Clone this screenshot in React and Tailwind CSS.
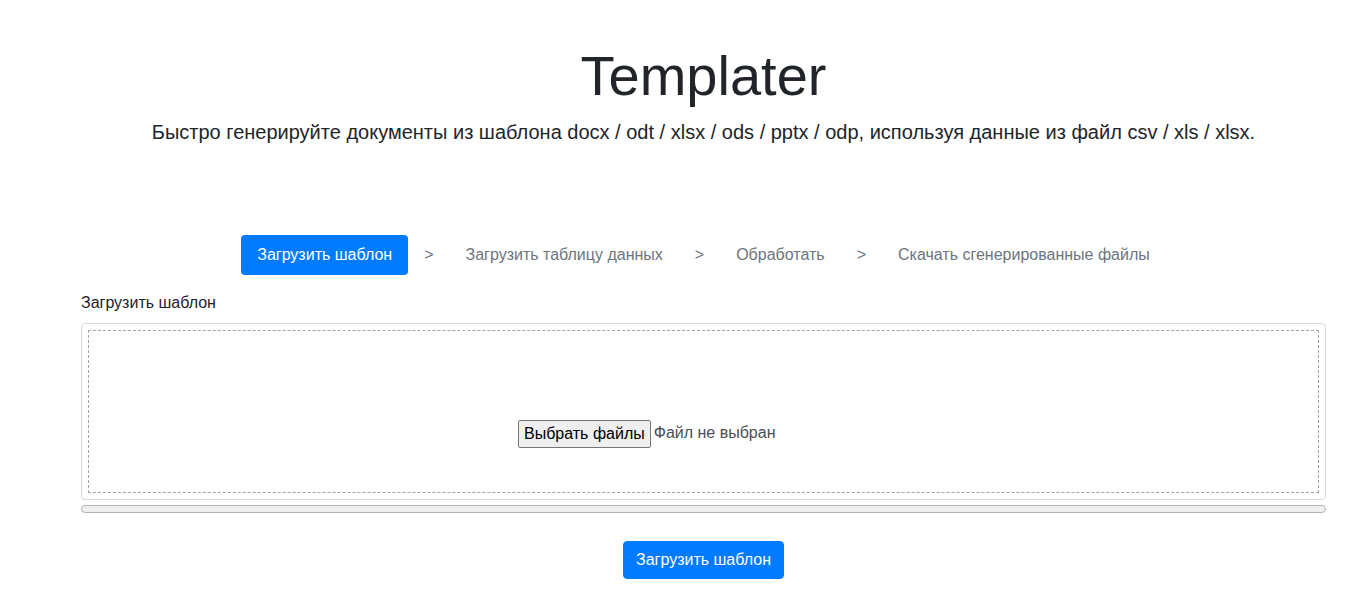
const STEPS = ["Загрузить шаблон", "Загрузить таблицу данных", "Обработать", "Скачать сгенерированные файлы"];

export default function App() {
  const active = 0;

  return (
    <div className="min-h-screen bg-white text-[#212529]" style={{ fontFamily: '"Liberation Sans", Arial, sans-serif' }}>
      <div className="ml-[45px] pt-[42px]">
        <h1 className="mb-2 text-center text-[56px] font-light leading-[1.2]">Templater</h1>
        <p className="text-center text-[20px] font-light leading-[1.5]">
          Быстро генерируйте документы из шаблона docx / odt / xlsx / ods / pptx / odp, используя данные из файл csv / xls / xlsx.
        </p>

        <nav className="mt-[88px] flex items-center justify-center text-[16px] leading-6">
          {STEPS.map((step, index) => (
            <div className="flex items-center" key={step}>
              {index > 0 ? <span className="px-4 text-[#6c757d]">&gt;</span> : null}
              <span
                className={
                  index === active
                    ? "rounded bg-[#007bff] px-4 py-2 text-white"
                    : "px-4 py-2 text-[#6c757d]"
                }
              >
                {step}
              </span>
            </div>
          ))}
        </nav>

        <div className="mx-[36px] mt-[16px]">
          <label className="mb-2 block text-[16px] leading-6">Загрузить шаблон</label>
          <div className="rounded border border-[#dcdcdc] p-[6px]">
            <div className="flex h-[163px] items-start border border-dashed border-[#9aa7a7] pl-[429px] pt-[89px]">
              <button className="rounded-[2px] border border-[#767676] bg-[#efefef] px-[5px] py-[1px] text-[16px] leading-6 text-black">
                Выбрать файлы
              </button>
              <span className="ml-[3px] pt-[1px] text-[16px] leading-6 text-[#495057]">Файл не выбран</span>
            </div>
          </div>
          <div className="mt-[5px] h-[8px] rounded-full border border-[#b4b4b4] bg-[#efefef]" />

          <div className="mt-[28px] flex justify-center">
            <button className="rounded border border-[#007bff] bg-[#007bff] px-3 py-[6px] text-[16px] leading-6 text-white">
              Загрузить шаблон
            </button>
          </div>
        </div>
      </div>
    </div>
  );
}
